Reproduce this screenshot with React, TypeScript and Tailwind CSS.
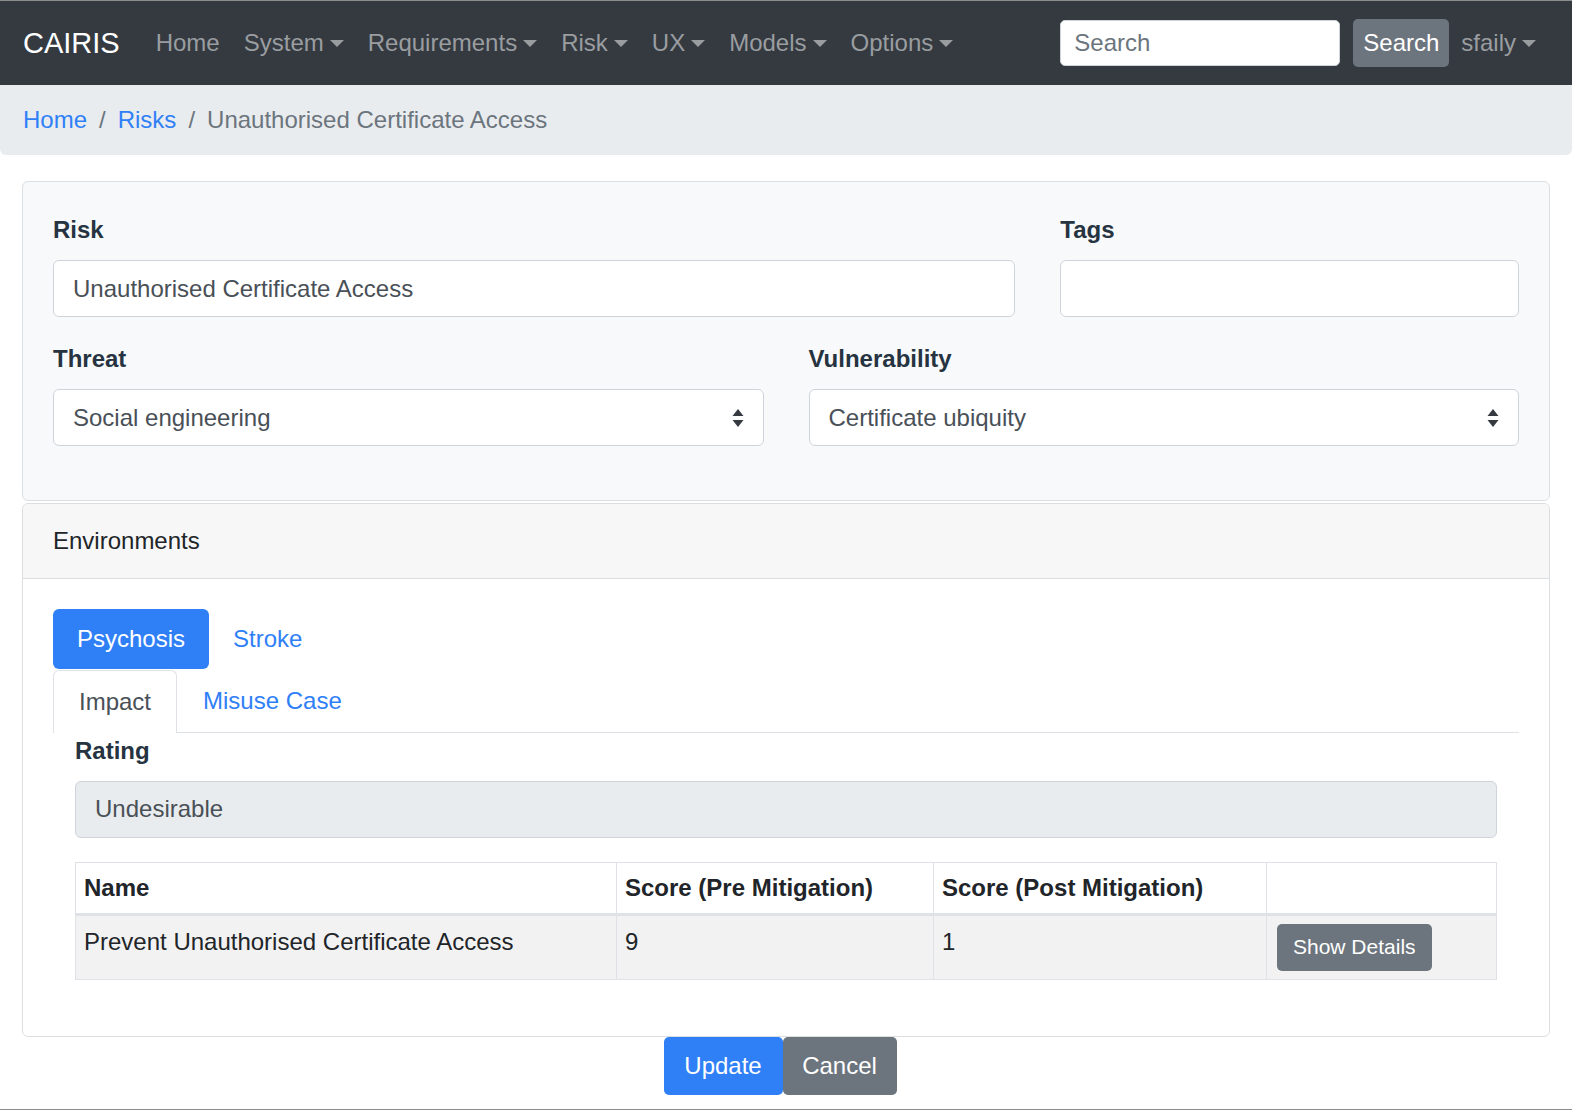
import React from "react";

const Caret = () => (
  <span className="ml-[6px] inline-block h-0 w-0 border-x-[7px] border-t-[7px] border-x-transparent border-t-current align-middle" />
);

const SelectArrows = () => (
  <svg width="14" height="20" viewBox="0 0 14 20" className="shrink-0">
    <path d="M7 1 L12.5 8 L1.5 8 Z" fill="#343a40" />
    <path d="M7 19 L12.5 12 L1.5 12 Z" fill="#343a40" />
  </svg>
);

export default function App() {
  const navItems = [
    { label: "Home", caret: false },
    { label: "System", caret: true },
    { label: "Requirements", caret: true },
    { label: "Risk", caret: true },
    { label: "UX", caret: true },
    { label: "Models", caret: true },
    { label: "Options", caret: true },
  ];

  return (
    <div
      className="min-h-[1110px] w-[1572px] bg-white text-[24px] leading-[36px] text-[#212529]"
      style={{ fontFamily: '"Liberation Sans", Arial, Helvetica, sans-serif' }}
    >
      {/* Navbar */}
      <nav className="flex h-[85px] items-center border-t border-[#8d8d8d] bg-[#343a40] pl-[23px] pr-[36px]">
        <span className="mr-[24px] text-[29px] leading-[40px] text-white">CAIRIS</span>
        <ul className="flex items-center">
          {navItems.map((n) => (
            <li key={n.label} className="flex items-center px-[12px] text-[#9a9da0]">
              {n.label}
              {n.caret && <Caret />}
            </li>
          ))}
        </ul>
        <div className="ml-auto flex items-center">
          <div className="mr-[13px] flex h-[46px] w-[280px] items-center rounded-[5px] border border-[#ced4da] bg-white px-[13px] text-[#6c757d]">
            Search
          </div>
          <button className="flex h-[48px] w-[96px] items-center justify-center rounded-[5px] bg-[#6c757d] text-white">
            Search
          </button>
          <span className="flex items-center pl-[12px] text-[#9a9da0]">
            sfaily
            <Caret />
          </span>
        </div>
      </nav>

      {/* Breadcrumb */}
      <div className="flex h-[70px] items-center rounded-b-[6px] bg-[#e9ecef] px-[23px]">
        <span className="text-[#2f80f7]">Home</span>
        <span className="px-[12px] text-[#6c757d]">/</span>
        <span className="text-[#2f80f7]">Risks</span>
        <span className="px-[12px] text-[#6c757d]">/</span>
        <span className="text-[#6c757d]">Unauthorised Certificate Access</span>
      </div>

      <div className="mt-[26px] pl-[22px] pr-[22px]">
        {/* Card 1 */}
        <div className="rounded-[6px] border-[1.5px] border-[#dcdfe2] bg-[#f8f9fa] px-[30px] pb-[30px] pt-[30px]">
          <div className="grid grid-cols-12 gap-x-[45px]">
            <div className="col-span-8 mb-[24px]">
              <label className="mb-[12px] block font-bold text-[#263341]">Risk</label>
              <div className="flex h-[57px] items-center rounded-[6px] border border-[#ced4da] bg-white px-[19px] text-[#495057]">
                Unauthorised Certificate Access
              </div>
            </div>
            <div className="col-span-4 mb-[24px]">
              <label className="mb-[12px] block font-bold text-[#263341]">Tags</label>
              <div className="h-[57px] rounded-[6px] border border-[#ced4da] bg-white" />
            </div>
            <div className="col-span-6 mb-[24px]">
              <label className="mb-[12px] block font-bold text-[#263341]">Threat</label>
              <div className="flex h-[57px] items-center justify-between rounded-[6px] border border-[#ced4da] bg-white pl-[19px] pr-[18px] text-[#495057]">
                <span>Social engineering</span>
                <SelectArrows />
              </div>
            </div>
            <div className="col-span-6 mb-[24px]">
              <label className="mb-[12px] block font-bold text-[#263341]">Vulnerability</label>
              <div className="flex h-[57px] items-center justify-between rounded-[6px] border border-[#ced4da] bg-white pl-[19px] pr-[18px] text-[#495057]">
                <span>Certificate ubiquity</span>
                <SelectArrows />
              </div>
            </div>
          </div>
        </div>

        {/* Card 2 */}
        <div className="mt-[2px] rounded-[6px] border-[1.5px] border-[#dcdfe2] bg-white">
          <div className="flex h-[75px] items-center rounded-t-[6px] border-b-[1.5px] border-[#dcdfe2] bg-[#f7f7f7] px-[30px]">
            Environments
          </div>
          <div className="px-[30px] pb-[32px] pt-[30px]">
            {/* Pills */}
            <div className="flex items-center">
              <span className="flex h-[60px] items-center rounded-[6px] bg-[#2f80f7] px-[24px] text-white">
                Psychosis
              </span>
              <span className="flex h-[60px] items-center px-[24px] text-[#2f80f7]">Stroke</span>
            </div>
            {/* Tabs */}
            <div className="mt-[1px] flex items-end border-b-[1.5px] border-[#dee2e6]">
              <span className="-mb-[1.5px] flex h-[63px] items-center rounded-t-[6px] border-[1.5px] border-b-0 border-[#dee2e6] bg-white px-[25px] text-[#495057]">
                Impact
              </span>
              <span className="flex h-[61px] items-center px-[26px] text-[#2f80f7]">Misuse Case</span>
            </div>
            {/* Tab content */}
            <div className="px-[22px]">
              <label className="block font-bold text-[#263341]">Rating</label>
              <div className="mt-[12px] flex h-[57px] items-center rounded-[6px] border border-[#ced4da] bg-[#e9ecef] px-[19px] text-[#495057]">
                Undesirable
              </div>
              <table className="mb-[24px] mt-[24px] w-full border-collapse">
                <thead>
                  <tr className="h-[52px] bg-white">
                    <th className="w-[541px] border-[1.5px] border-b-[3px] border-[#dee2e6] px-[8px] text-left align-middle font-bold">
                      Name
                    </th>
                    <th className="w-[317px] border-[1.5px] border-b-[3px] border-[#dee2e6] px-[8px] text-left align-middle font-bold">
                      Score (Pre Mitigation)
                    </th>
                    <th className="w-[333px] border-[1.5px] border-b-[3px] border-[#dee2e6] px-[8px] text-left align-middle font-bold">
                      Score (Post Mitigation)
                    </th>
                    <th className="border-[1.5px] border-b-[3px] border-[#dee2e6] px-[8px]" />
                  </tr>
                </thead>
                <tbody>
                  <tr className="h-[64px] bg-[#f2f2f2]">
                    <td className="border-[1.5px] border-[#dee2e6] px-[8px] pt-[8px] align-top">
                      Prevent Unauthorised Certificate Access
                    </td>
                    <td className="border-[1.5px] border-[#dee2e6] px-[8px] pt-[8px] align-top">9</td>
                    <td className="border-[1.5px] border-[#dee2e6] px-[8px] pt-[8px] align-top">1</td>
                    <td className="border-[1.5px] border-[#dee2e6] px-[10px] py-[8px] align-top">
                      <button className="flex h-[47px] items-center rounded-[5px] bg-[#6c757d] px-[16px] text-[21px] text-white">
                        Show Details
                      </button>
                    </td>
                  </tr>
                </tbody>
              </table>
            </div>
          </div>
        </div>

        {/* Buttons */}
        <div className="flex justify-center pr-[12px]">
          <button className="flex h-[58px] w-[119px] items-center justify-center rounded-[5px] bg-[#2f80f7] text-white">
            Update
          </button>
          <button className="flex h-[58px] w-[114px] items-center justify-center rounded-[5px] bg-[#6c757d] text-white">
            Cancel
          </button>
        </div>
      </div>
      <div className="mt-[14px] h-[2px] w-full bg-[#8d8d8d]" />
    </div>
  );
}
